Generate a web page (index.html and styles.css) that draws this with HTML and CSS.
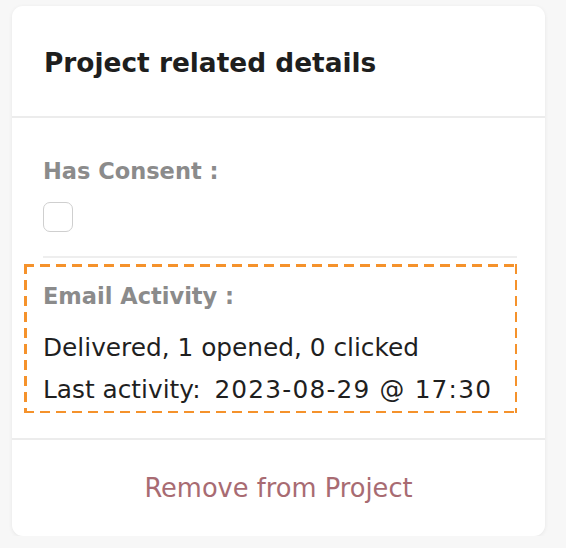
FILE: index.html
```html
<!DOCTYPE html>
<html>
<head>
<meta charset="utf-8">
<link rel="stylesheet" href="styles.css">
</head>
<body>
<div class="card">
  <div class="card-header">
    <h2 class="title">Project related details</h2>
  </div>
  <div class="card-body">
    <div class="field-consent">
      <div class="label">Has Consent :</div>
      <div class="checkbox"></div>
    </div>
    <div class="activity">
      <div class="label">Email Activity :</div>
      <div class="value value-first">Delivered, 1 opened, 0 clicked</div>
      <div class="value">Last activity: <span class="stamp">2023-08-29 @ 17:30</span></div>
    </div>
  </div>
  <div class="card-footer">
    <span class="remove">Remove from Project</span>
  </div>
</div>
</body>
</html>
```
FILE: styles.css
```css
html, body {
  margin: 0;
  padding: 0;
  background: #f7f7f7;
  font-family: "DejaVu Sans", "Open Sans", sans-serif;
}
body {
  padding: 6px 0 0 12px;
}
.card {
  width: 533px;
  height: 530px;
  background: #fff;
  border-radius: 11px;
  box-shadow: 0 1px 4px rgba(0, 0, 0, 0.07);
  display: flex;
  flex-direction: column;
}
.card-header {
  flex: none;
  border-bottom: 2px solid #ececec;
  padding: 4px 32px 0;
  box-sizing: border-box;
  height: 112px;
  display: flex;
  align-items: center;
}
.title {
  margin: 0;
  font-size: 26.4px;
  font-weight: 700;
  color: #1e1e1e;
  line-height: 32px;
}
.card-body {
  flex: none;
  padding: 0 28px 25px 12px;
  border-bottom: 2px solid #ececec;
}
.field-consent {
  margin-left: 19px;
  padding-top: 38px;
  box-sizing: border-box;
  height: 140px;
  border-bottom: 2px solid #eeeeee;
}
.label {
  font-size: 22.5px;
  font-weight: 700;
  color: #8b8b8b;
  line-height: 30px;
}
.checkbox {
  margin-top: 16px;
  width: 28px;
  height: 28px;
  border: 1.5px solid #cfcfcf;
  border-radius: 7px;
}
.activity {
  margin-top: 6px;
  height: 149px;
  box-sizing: border-box;
  padding: 17px 19px 0;
  background:
    linear-gradient(90deg, #f5922b 10px, transparent 10px) 0 0 / 16px 2.5px repeat-x,
    linear-gradient(90deg, #f5922b 10px, transparent 10px) 0 100% / 16px 2.5px repeat-x,
    linear-gradient(180deg, #f5922b 10px, transparent 10px) 0 0 / 2.5px 16px repeat-y,
    linear-gradient(180deg, #f5922b 10px, transparent 10px) 100% 0 / 2.5px 16px repeat-y;
}
.value {
  font-size: 24.8px;
  color: #1f1f1f;
  line-height: 42px;
  white-space: nowrap;
}
.value-first {
  margin-top: 16px;
}
.stamp {
  margin-left: 6px;
  letter-spacing: 1.2px;
}
.card-footer {
  flex: 1;
  display: flex;
  align-items: center;
  justify-content: center;
}
.remove {
  font-size: 25.7px;
  line-height: 30px;
  color: #a86b72;
}
```
